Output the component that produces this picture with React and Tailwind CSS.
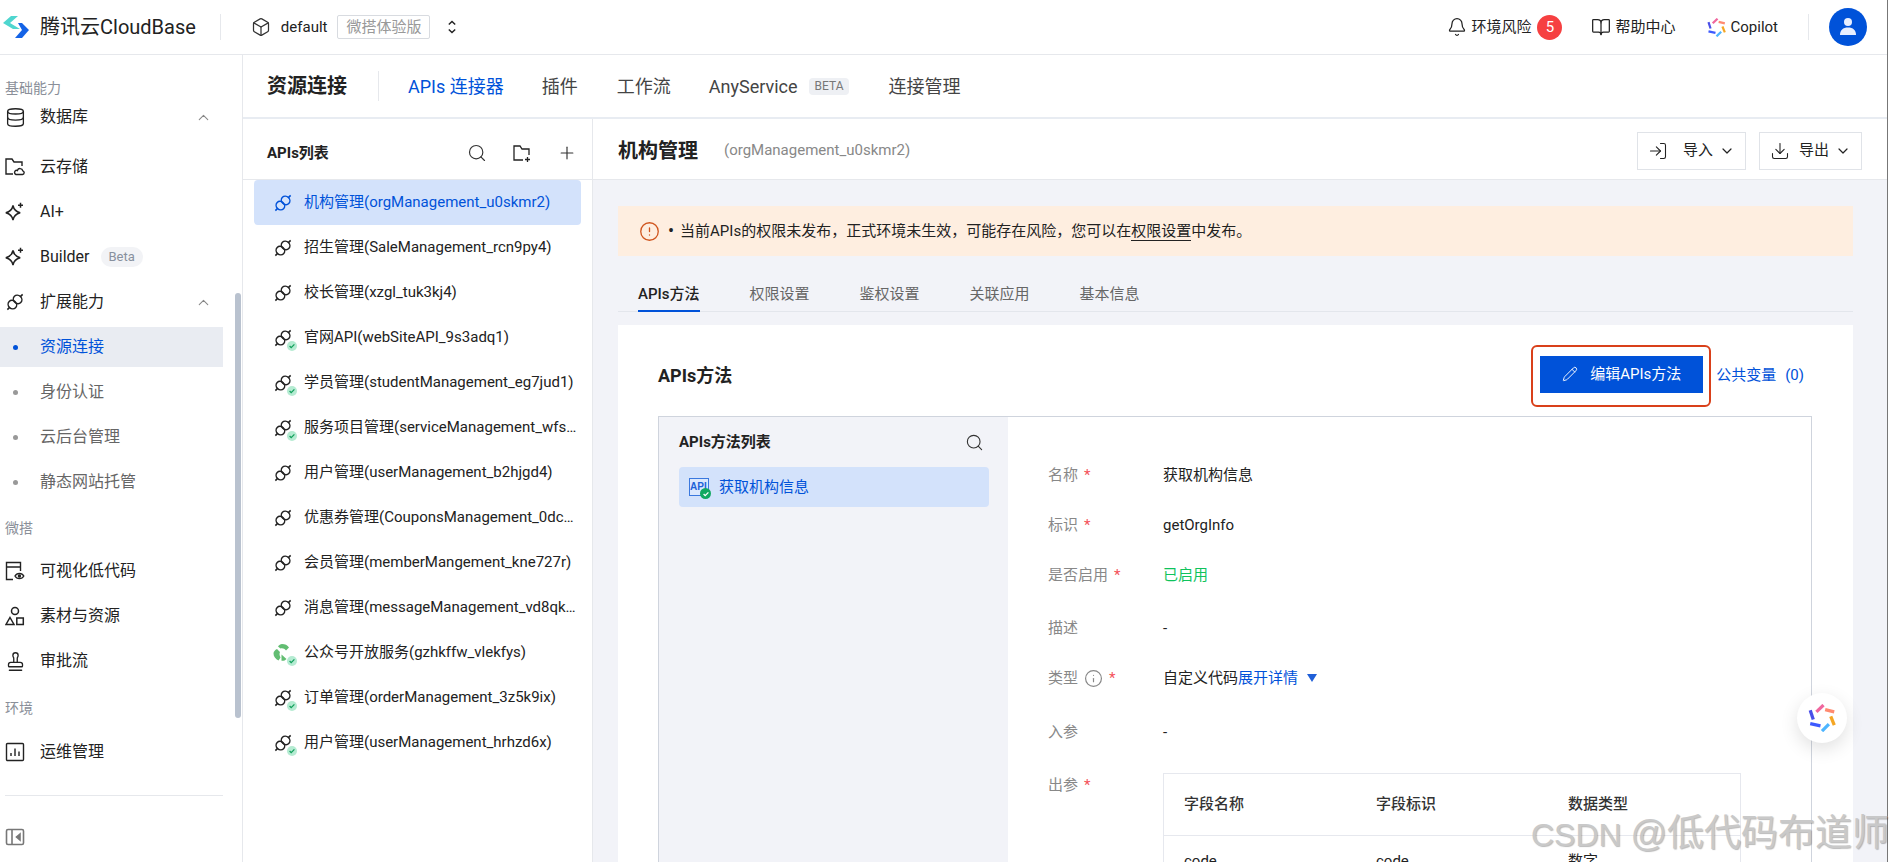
import React from "react";
import { Search, Plus, Bell, BookOpen, Box, ChevronUp, ChevronDown, Database, Pencil, Download, LogIn, Info, CircleAlert, Stamp } from "lucide-react";

const ALERT_HEAD = "当前APIs的权限未发布\uFF0C正式环境未生效\uFF0C可能存在风险\uFF0C您可以在";

function Chain({ color = "#222", check = false }) {
  return (
    <span className="relative block w-[20px] h-[20px] shrink-0">
      <svg viewBox="0 0 20 20" className="w-[20px] h-[20px]" fill="none" stroke={color} strokeWidth="1.500">
        <g transform="rotate(-45 10 10)">
          <ellipse cx="6.300" cy="10" rx="4" ry="4.500" />
          <ellipse cx="13.700" cy="10" rx="4" ry="4.500" />
          <path d="M-.8 10h3.200M17.600 10h3.200" />
        </g>
      </svg>
      {check && <Check />}
    </span>
  );
}

function Check() {
  return (
    <span className="absolute right-[-4px] bottom-[-3px] w-[10px] h-[10px] rounded-full bg-[#b5ebd2] flex items-center justify-center">
      <svg viewBox="0 0 10 10" className="w-[8px] h-[8px]" fill="none" stroke="#12a05c" strokeWidth="1.600"><path d="M2 5l2 2 4-4" /></svg>
    </span>
  );
}

function Recycle() {
  return (
    <span className="relative block w-[20px] h-[20px] shrink-0">
      <svg viewBox="0 0 20 20" className="w-[20px] h-[20px]" fill="#62bd72">
        <path d="M9 1c3 0 5.500 1 7 3.500l-3 3C11.500 5.500 9.500 5 7.500 5.500L5 3.500C6 2 7.500 1 9 1z" />
        <path d="M4 6l3 3c-.8 1.800-.5 3.500.5 5.500L5.500 17.500C2.500 16 .5 13.500.5 10.500.5 8.500 2 7 4 6z" />
        <path d="M8.500 11.500l5 4.500c-1.200 1.500-3 2-5 1.800z" />
      </svg>
      <Check />
    </span>
  );
}

function Logo() {
  return (
    <svg viewBox="0 0 30 24" className="w-[30px] h-[24px]">
      <path d="M2 8 L10 1 H17 L9 8 L19 14 H12 Z" fill="#4fd6cf" />
      <path d="M17 8 H21 L28 15 L21 23 H14 L21 15 Z" fill="#1463e6" />
    </svg>
  );
}

function Copilot({ className }) {
  const s = [
    ["M7.200 6.700L13.300 .9", "#f0679e"],
    ["M14.700 4.800L22.500 6.700", "#ff8a70"],
    ["M19.500 10.700L22.500 18.100", "#f5a623"],
    ["M12 23.200L17.900 17.300", "#4db5ff"],
    ["M1.900 16.800L10.700 18.700", "#3d5afe"],
    ["M1.900 5.300L4.500 13.300", "#4a4fe8"],
  ];
  return (
    <svg viewBox="0 0 24 24" className={className} fill="none" strokeWidth="2.800">
      {s.map(([d, c]) => <path key={c} d={d} stroke={c} />)}
    </svg>
  );
}

function Sparkle() {
  return (
    <svg viewBox="0 0 20 20" className="w-[20px] h-[20px]" fill="none" stroke="#222" strokeWidth="1.500">
      <path d="M8 3.500c.8 4.200 2.500 6 7.200 7.200C10.500 11.900 8.800 13.700 8 18c-.8-4.300-2.500-6.100-7.200-7.300C5.500 9.500 7.200 7.700 8 3.500z" />
      <path d="M15.500 .8v5M13 3.300h5" />
    </svg>
  );
}

function FolderCloud() {
  return (
    <svg viewBox="0 0 20 20" className="w-[20px] h-[20px]" fill="none" stroke="#222" strokeWidth="1.400">
      <path d="M8 17H1V2h6l2 3h8v4" />
      <path d="M11 17.500h6.500a1.900 1.900 0 0 0 .3-3.700 2.800 2.800 0 0 0-5.400-.3 2 2 0 0 0-1.400 4z" />
    </svg>
  );
}

function PageEye() {
  return (
    <svg viewBox="0 0 20 20" className="w-[20px] h-[20px]" fill="none" stroke="#222" strokeWidth="1.400">
      <path d="M8 18.500H1.500v-17h14V10M1.500 6h14" />
      <path d="M10 15c1.800-3.400 7-3.400 8.800 0-1.800 3.400-7 3.400-8.800 0z" />
      <circle cx="14.400" cy="15" r="1" fill="#222" />
    </svg>
  );
}

function Shapes() {
  return (
    <svg viewBox="0 0 20 20" className="w-[20px] h-[20px]" fill="none" stroke="#222" strokeWidth="1.500">
      <circle cx="10" cy="5" r="3.500" />
      <path d="M5 11.500L9 18.500H1z" />
      <rect x="11.800" y="12" width="6.500" height="6.500" />
    </svg>
  );
}

function ChartBox() {
  return (
    <svg viewBox="0 0 20 20" className="w-[20px] h-[20px]" fill="none" stroke="#222" strokeWidth="1.400">
      <rect x="1.500" y="1.500" width="17" height="17" rx="1" />
      <path d="M6 14v-3M10 14V6.500M14 14v-4.500" />
    </svg>
  );
}

function Collapse() {
  return (
    <svg viewBox="0 0 20 20" className="w-[20px] h-[20px]" fill="none" stroke="#777" strokeWidth="1.600">
      <rect x="1.500" y="2.500" width="17" height="15" rx="1.500" />
      <path d="M7 2.500v15" />
      <path d="M15 7l-3.500 3 3.500 3z" fill="#777" />
    </svg>
  );
}

function FolderPlus() {
  return (
    <svg viewBox="0 0 20 20" className="w-[20px] h-[20px]" fill="none" stroke="#222" strokeWidth="1.300">
      <path d="M11 17H2V3h6l2 3h7v6" />
      <path d="M15.500 14v5M13 16.500h5" />
    </svg>
  );
}

function UpDown() {
  return (
    <svg viewBox="0 0 12 20" className="w-[10px] h-[16px]" fill="none" stroke="#222" strokeWidth="1.800">
      <path d="M2 7l4-4 4 4M2 13l4 4 4-4" />
    </svg>
  );
}

function Avatar() {
  return (
    <span className="w-[38px] h-[38px] rounded-full bg-[#0052d9] flex items-center justify-center">
      <svg viewBox="0 0 20 20" className="w-[20px] h-[20px]" fill="#e8efff">
        <circle cx="10" cy="5" r="4" />
        <path d="M2 18c0-5 3-7.500 8-7.500s8 2.500 8 7.500z" />
      </svg>
    </span>
  );
}

function ApiIcon() {
  return (
    <span className="relative block w-[20px] h-[18px] shrink-0 border border-[#3a78de] bg-[#dbe8fd]">
      <span className="absolute left-0 top-[1px] text-[10px] leading-[13px] font-bold text-[#1e63d8] font-['Liberation_Sans',sans-serif]">API</span>
      <span className="absolute right-[-3px] bottom-[-4px] w-[11px] h-[11px] rounded-full bg-[#10a860] flex items-center justify-center">
        <svg viewBox="0 0 10 10" className="w-[8px] h-[8px]" fill="none" stroke="#fff" strokeWidth="1.600"><path d="M2 5l2 2 4-4" /></svg>
      </span>
    </span>
  );
}

function SideItem({ icon, label, chevron, badge, className = "" }) {
  return (
    <div className={`h-[40px] flex items-center pl-[5px] pr-[11px] w-[223px] text-[16px] text-[#222] ${className}`}>
      <span className="w-[20px] h-[20px] flex items-center justify-center shrink-0">{icon}</span>
      <span className="ml-[15px]">{label}</span>
      {badge && <span className="ml-[11px] h-[20px] px-[8px] rounded-full bg-[#f2f3f6] text-[13px] leading-[20px] text-[#88909e]">{badge}</span>}
      {chevron && <ChevronUp className="ml-auto w-[17px] h-[17px] text-[#888]" strokeWidth={1.500} />}
    </div>
  );
}

function SubItem({ label, active }) {
  return (
    <div className={`h-[40px] flex items-center w-[223px] text-[16px] ${active ? "bg-[#e9ecf2] text-[#0052d9]" : "text-[#666]"}`}>
      <span className={`ml-[13px] w-[5px] h-[5px] rounded-full ${active ? "bg-[#0052d9]" : "bg-[#999]"}`} />
      <span className="ml-[22px]">{label}</span>
    </div>
  );
}

function SectionLabel({ children, className = "" }) {
  return <div className={`pl-[5px] text-[14px] leading-[20px] text-[#8a8f99] ${className}`}>{children}</div>;
}

const apis = [
  ["招生管理(SaleManagement_rcn9py4)", false],
  ["校长管理(xzgl_tuk3kj4)", false],
  ["官网API(webSiteAPI_9s3adq1)", true],
  ["学员管理(studentManagement_eg7jud1)", true],
  ["服务项目管理(serviceManagement_wfs…", true],
  ["用户管理(userManagement_b2hjgd4)", false],
  ["优惠券管理(CouponsManagement_0dc…", false],
  ["会员管理(memberMangement_kne727r)", false],
  ["消息管理(messageManagement_vd8qk…", false],
];

function ApiRow({ text, check, icon }) {
  return (
    <div className="h-[45px] flex items-center pl-[30px] text-[15px] text-[#222] whitespace-nowrap">
      {icon || <Chain check={check} />}
      <span className="ml-[11px]">{text}</span>
    </div>
  );
}

function Label({ text, req = true, info }) {
  return (
    <div className="w-[115px] shrink-0 flex items-center text-[15px] text-[#888]">
      <span>{text}</span>
      {info && <Info className="ml-[6px] w-[19px] h-[19px] text-[#888]" strokeWidth={1.500} />}
      {req && <span className="ml-[6px] text-[#f4505a]">*</span>}
    </div>
  );
}

export default function App() {
  return (
    <div className="relative w-[1890px] h-[862px] overflow-hidden bg-white font-['Roboto','Noto_Sans_CJK_SC',sans-serif]">
      <div className="w-[1888px] h-[862px] flex flex-col border-r border-[#777]">
        {/* top bar */}
        <header className="h-[55px] shrink-0 flex items-center border-b border-[#e6e8ec] text-[15px] text-[#222]">
          <span className="ml-[1px]"><Logo /></span>
          <span className="ml-[9px] text-[20px] text-[#222] whitespace-nowrap">腾讯云CloudBase</span>
          <span className="ml-[24px] w-px h-[26px] bg-[#e6e8ec]" />
          <Box className="ml-[30px] w-[20px] h-[20px] text-[#333]" strokeWidth={1.500} />
          <span className="ml-[10px]">default</span>
          <span className="ml-[10px] h-[24px] w-[93px] border border-[#d8dbe0] rounded-[2px] text-[#999] flex items-center justify-center">微搭体验版</span>
          <span className="ml-[17px]"><UpDown /></span>
          <div className="ml-auto flex items-center">
            <Bell className="w-[20px] h-[20px] text-[#222]" strokeWidth={1.500} />
            <span className="ml-[4px]">环境风险</span>
            <span className="ml-[6px] w-[25px] h-[25px] rounded-full bg-[#f64041] text-white flex items-center justify-center text-[15px]">5</span>
            <BookOpen className="ml-[29px] w-[20px] h-[20px] text-[#222]" strokeWidth={1.500} />
            <span className="ml-[4px]">帮助中心</span>
            <Copilot className="ml-[31px] w-[19px] h-[19px]" />
            <span className="ml-[5px]">Copilot</span>
            <span className="ml-[30px] w-px h-[26px] bg-[#e6e8ec]" />
            <span className="ml-[20px] mr-[20px]"><Avatar /></span>
          </div>
        </header>

        <div className="flex-1 flex min-h-0">
          {/* sidebar */}
          <aside className="relative w-[243px] shrink-0 border-r border-[#e6e8ec] pt-[23px]">
            <SectionLabel>基础能力</SectionLabel>
            <SideItem className="-mt-px" icon={<Database className="w-[21px] h-[21px] shrink-0" strokeWidth={1.500} />} label="数据库" chevron />
            <SideItem className="mt-[10px]" icon={<FolderCloud />} label="云存储" />
            <SideItem className="mt-[5px]" icon={<Sparkle />} label="AI+" />
            <SideItem className="mt-[5px]" icon={<Sparkle />} label="Builder" badge="Beta" />
            <SideItem className="mt-[5px]" icon={<Chain />} label="扩展能力" chevron />
            <div className="mt-[5px] flex flex-col gap-[5px]">
              <SubItem label="资源连接" active />
              <SubItem label="身份认证" />
              <SubItem label="云后台管理" />
              <SubItem label="静态网站托管" />
            </div>
            <SectionLabel className="mt-[16px]">微搭</SectionLabel>
            <SideItem className="mt-[13px]" icon={<PageEye />} label="可视化低代码" />
            <SideItem className="mt-[5px]" icon={<Shapes />} label="素材与资源" />
            <SideItem className="mt-[5px]" icon={<Stamp className="w-[21px] h-[21px] shrink-0" strokeWidth={1.500} />} label="审批流" />
            <SectionLabel className="mt-[17px]">环境</SectionLabel>
            <SideItem className="mt-[14px]" icon={<ChartBox />} label="运维管理" />
            <div className="ml-[5px] w-[218px] h-px bg-[#e6e8ec] mt-[23px]" />
            <div className="mt-[31px] pl-[5px]"><Collapse /></div>
            <div className="absolute left-[235px] top-[238px] w-[6px] h-[425px] rounded-full bg-[#b9c2cf]" />
          </aside>

          <div className="flex-1 flex flex-col min-w-0">
            {/* nav */}
            <nav className="h-[64px] shrink-0 flex items-center border-b-2 border-[#e8ecf2] pl-[24px] text-[18px] text-[#444]">
              <span className="text-[20px] font-bold text-[#222]">资源连接</span>
              <span className="ml-[31px] w-px h-[30px] bg-[#e6e8ec]" />
              <span className="ml-[29px] text-[#0052d9]">APIs 连接器</span>
              <span className="ml-[38px]">插件</span>
              <span className="ml-[39px]">工作流</span>
              <span className="ml-[38px]">AnyService</span>
              <span className="ml-[11px] h-[17px] px-[6px] rounded-[4px] bg-[#eef0f4] text-[12px] leading-[17px] text-[#777]">BETA</span>
              <span className="ml-[39px]">连接管理</span>
            </nav>

            <div className="flex-1 flex min-h-0">
              {/* api list */}
              <section className="w-[350px] shrink-0 border-r border-[#e6e8ec] flex flex-col">
                <div className="h-[61px] shrink-0 flex items-center border-b border-[#e6e8ec] pl-[24px] pr-[15px] pt-[8px]">
                  <span className="text-[15px] font-bold text-[#222]">APIs列表</span>
                  <Search className="ml-auto w-[20px] h-[20px] text-[#333]" strokeWidth={1.400} />
                  <span className="ml-[25px]"><FolderPlus /></span>
                  <Plus className="ml-[25px] w-[20px] h-[20px] text-[#333]" strokeWidth={1.400} />
                </div>
                <div className="mx-[11px] h-[45px] rounded-[4px] bg-[#d3e2fb] flex items-center pl-[19px] text-[15px] text-[#0052d9] whitespace-nowrap">
                  <Chain color="#0052d9" />
                  <span className="ml-[11px]">机构管理(orgManagement_u0skmr2)</span>
                </div>
                {apis.map(([t, c]) => <ApiRow key={t} text={t} check={c} />)}
                <ApiRow text="公众号开放服务(gzhkffw_vlekfys)" icon={<Recycle />} />
                <ApiRow text="订单管理(orderManagement_3z5k9ix)" check />
                <ApiRow text="用户管理(userManagement_hrhzd6x)" check />
              </section>

              {/* detail */}
              <main className="flex-1 min-w-0 flex flex-col bg-[#f2f3f8]">
                <div className="h-[61px] shrink-0 bg-white border-b border-[#e6e8ec] flex items-center pl-[25px] pr-[25px] pt-[3px]">
                  <span className="text-[20px] font-bold text-[#222]">机构管理</span>
                  <span className="ml-[26px] text-[15px] text-[#888]">(orgManagement_u0skmr2)</span>
                  <button className="ml-auto h-[38px] w-[109px] border border-[#e0e3e8] flex items-center justify-center text-[15px] text-[#222]">
                    <LogIn className="w-[20px] h-[20px]" strokeWidth={1.300} />
                    <span className="ml-[15px]">导入</span>
                    <ChevronDown className="ml-[6px] w-[16px] h-[16px]" strokeWidth={1.800} />
                  </button>
                  <button className="ml-[13px] h-[38px] w-[103px] border border-[#e0e3e8] flex items-center justify-center text-[15px] text-[#222]">
                    <Download className="w-[20px] h-[20px]" strokeWidth={1.300} />
                    <span className="ml-[9px]">导出</span>
                    <ChevronDown className="ml-[6px] w-[16px] h-[16px]" strokeWidth={1.800} />
                  </button>
                </div>

                <div className="mt-[26px] mx-[25px] flex-1 min-h-0 flex flex-col w-[1235px]">
                  <div className="h-[50px] shrink-0 bg-[#feeee0] flex items-center pl-[21px] text-[15px] text-[#222]">
                    <CircleAlert className="w-[21px] h-[21px] text-[#d0561f]" strokeWidth={1.500} />
                    <span className="ml-[8px] text-[18px] leading-none">•</span>
                    <span className="ml-[6px]">{ALERT_HEAD}<span className="border-b border-[#222]">权限设置</span>中发布。</span>
                  </div>
                  <div className="mt-[27px] h-[29px] shrink-0 border-b border-[#e3e6ec] flex text-[15px] text-[#666] pl-[20px] gap-[50px]">
                    <span className="h-[29px] border-b-2 border-[#0052d9] font-medium text-[#222]">APIs方法</span>
                    <span>权限设置</span>
                    <span>鉴权设置</span>
                    <span>关联应用</span>
                    <span>基本信息</span>
                  </div>

                  <div className="mt-[13px] flex-1 min-h-0 bg-white pl-[40px] pr-[41px] flex flex-col">
                    <div className="h-[91px] shrink-0 flex items-center pt-[10px]">
                      <span className="text-[18px] font-bold text-[#222]">APIs方法</span>
                      <div className="ml-auto flex items-center">
                        <div className="pl-[7px] pr-[6px] pt-[9px] pb-[12px] border-2 border-[#d9401a] rounded-[6px]">
                          <button className="h-[37px] w-[163px] bg-[#0052d9] text-white text-[15px] flex items-center justify-center">
                            <Pencil className="w-[16px] h-[16px]" strokeWidth={1.400} />
                            <span className="ml-[12px]">编辑APIs方法</span>
                          </button>
                        </div>
                        <span className="ml-[5px] mr-[8px] text-[15px] text-[#0052d9] whitespace-nowrap">公共变量<span className="ml-[9px]">(0)</span></span>
                      </div>
                    </div>

                    <div className="flex-1 min-h-0 flex border border-[#cfd4dd] border-b-0">
                      <div className="w-[349px] shrink-0 bg-[#f2f3f8] pl-[20px] pr-[19px]">
                        <div className="h-[50px] flex items-center">
                          <span className="text-[15px] font-bold text-[#222]">APIs方法列表</span>
                          <Search className="ml-auto w-[19px] h-[19px] mr-[5px] text-[#333]" strokeWidth={1.400} />
                        </div>
                        <div className="h-[40px] rounded-[4px] bg-[#d3e2fb] flex items-center pl-[10px] text-[15px] text-[#0052d9]">
                          <ApiIcon />
                          <span className="ml-[10px]">获取机构信息</span>
                        </div>
                      </div>

                      <div className="flex-1 min-w-0 pl-[40px] pt-[43px] text-[15px] text-[#222]">
                        <div className="h-[30px] flex items-center"><Label text="名称" /><span>获取机构信息</span></div>
                        <div className="mt-[20px] h-[30px] flex items-center"><Label text="标识" /><span>getOrgInfo</span></div>
                        <div className="mt-[20px] h-[30px] flex items-center"><Label text="是否启用" /><span className="text-[#0fc35c]">已启用</span></div>
                        <div className="mt-[23px] h-[30px] flex items-center"><Label text="描述" req={false} /><span>-</span></div>
                        <div className="mt-[20px] h-[30px] flex items-center">
                          <Label text="类型" info />
                          <span>自定义代码</span>
                          <span className="text-[#0052d9]">展开详情</span>
                          <span className="ml-[9px] w-0 h-0 border-x-[5px] border-x-transparent border-t-[8px] border-t-[#1f5fd8]" />
                        </div>
                        <div className="mt-[24px] h-[30px] flex items-center"><Label text="入参" req={false} /><span>-</span></div>
                        <div className="mt-[26px] flex">
                          <div className="h-[20px] flex mt-[2px]"><Label text="出参" /></div>
                          <div className="w-[578px] border border-[#e6e8ee] shrink-0">
                            <div className="h-[62px] grid grid-cols-[192px_192px_1fr] items-center pl-[20px] border-b border-[#e6e8ee] font-medium text-[#333]">
                              <span>字段名称</span><span>字段标识</span><span>数据类型</span>
                            </div>
                            <div className="h-[50px] grid grid-cols-[192px_192px_1fr] items-center pl-[20px]">
                              <span>code</span><span>code</span><span>数字</span>
                            </div>
                          </div>
                        </div>
                      </div>
                    </div>
                  </div>
                </div>
              </main>
            </div>
          </div>
        </div>
      </div>

      {/* floating helper */}
      <div className="absolute left-[1797px] top-[693px] w-[50px] h-[50px] rounded-full bg-white shadow-[0_6px_18px_rgba(0,0,0,0.12)] flex items-center justify-center">
        <Copilot className="w-[28px] h-[28px]" />
      </div>

      {/* watermark */}
      <div className="absolute left-[1531px] top-[806px] whitespace-nowrap text-[#c4c4c4] opacity-90 [text-shadow:1px_1px_1px_rgba(0,0,0,0.3)] font-['Liberation_Sans','Noto_Sans_CJK_SC',sans-serif]">
        <span className="text-[32px]">CSDN </span><span className="text-[36px]">@</span><span className="text-[37px]">低代码布道师</span>
      </div>
    </div>
  );
}
